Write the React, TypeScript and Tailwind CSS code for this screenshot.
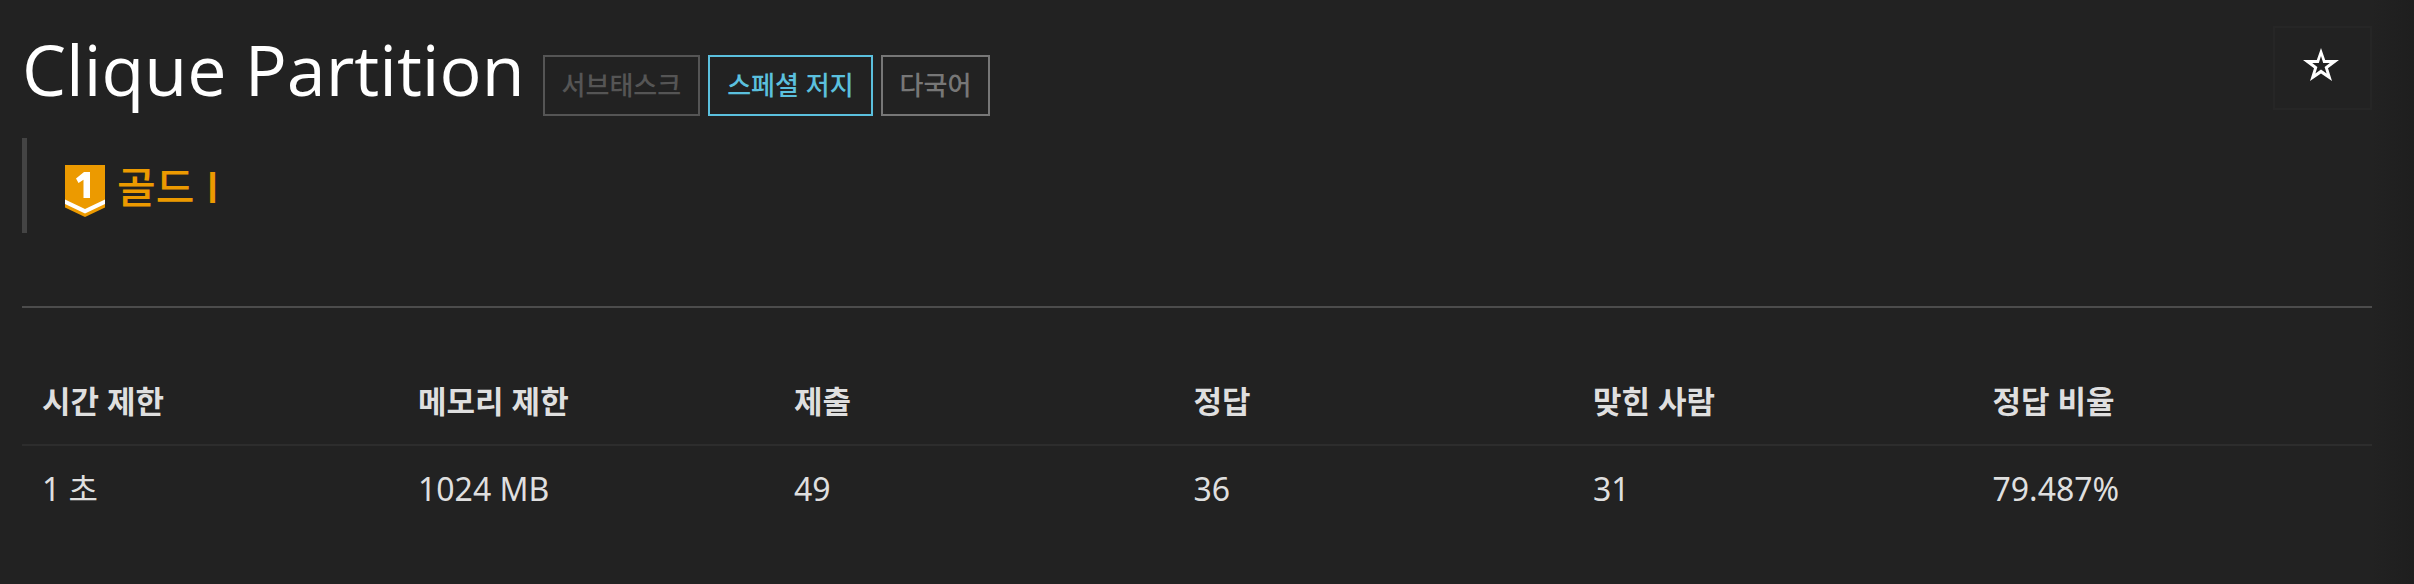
type Tag = { label: string; className: string };

const tags: Tag[] = [
  { label: "서브태스크", className: "border-[#555555] text-[#555555]" },
  { label: "스페셜 저지", className: "border-[#5bc0de] text-[#5bc0de]" },
  { label: "다국어", className: "border-[#777777] text-[#777777]" },
];

const columns = [
  { header: "시간 제한", value: "1 초", width: "w-[16%]" },
  { header: "메모리 제한", value: "1024 MB", width: "w-[16%]" },
  { header: "제출", value: "49", width: "w-[17%]" },
  { header: "정답", value: "36", width: "w-[17%]" },
  { header: "맞힌 사람", value: "31", width: "w-[17%]" },
  { header: "정답 비율", value: "79.487%", width: "w-[17%]" },
];

function TierBadge() {
  return (
    <svg viewBox="0 0 40 52" className="h-[52px] w-10 shrink-0" aria-hidden="true">
      <path d="M0 0H40V42.500L20 52L0 42.500Z" fill="#ec9a00" />
      <path d="M0 34.500L20 44L40 34.500V39L20 48.500L0 39Z" fill="#fff" />
      <path d="M19 7H25V33H18.500V14.800L13.500 18L11 13.500Z" fill="#fff" />
    </svg>
  );
}

function StarIcon() {
  return (
    <svg viewBox="0 0 36 34" className="h-[34px] w-9" aria-hidden="true">
      <path
        fill="#fff"
        fillRule="evenodd"
        d="M18 0L22.200 12H36L25 20.200L29 33L18 25.600L7 33L11 20.200L0 12H13.800ZM18 8L15.800 15H9.200L14.400 18.900L12.400 25.500L18 21.600L23.600 25.500L21.600 18.900L26.800 15H20.200Z"
      />
    </svg>
  );
}

export default function App() {
  return (
    <main
      lang="ko"
      className="flex min-h-screen bg-[#222222] font-['Noto_Sans','Noto_Sans_CJK_KR',sans-serif] text-[#dfdfdf]"
    >
      <div className="min-w-0 flex-1 pt-[26px] pb-14 pl-[22px]">
        <header className="flex items-start justify-between">
          <div className="flex flex-wrap items-end gap-x-[18px]">
            <h1 className="pb-1 font-['Open_Sans',sans-serif] text-[70px] leading-[86px] text-white">
              Clique Partition
            </h1>
            <ul className="flex gap-2">
              {tags.map((tag) => (
                <li
                  key={tag.label}
                  className={`border-2 px-[17px] text-[26px] leading-[57px] font-medium whitespace-nowrap ${tag.className}`}
                >
                  {tag.label}
                </li>
              ))}
            </ul>
          </div>
          <button
            type="button"
            aria-label="즐겨찾기"
            className="flex h-[84px] w-[99px] shrink-0 items-center justify-center border-2 border-[#262626] pr-[3px] pb-[6px]"
          >
            <StarIcon />
          </button>
        </header>

        <blockquote className="mt-[22px] flex h-[95px] items-center gap-3 border-l-[5px] border-[#444444] pt-[10px] pl-[38px] text-[42px] text-[#ec9a00]">
          <TierBadge />
          <span className="pb-3 font-['Noto_Sans_CJK_KR',sans-serif] leading-[60px] font-medium">골드 I</span>
        </blockquote>

        <hr className="mt-[73px] border-t-2 border-[#4c4c4c]" />

        <table className="mt-[50px] w-full table-fixed text-left leading-[46px]">
          <thead className="text-[31px]">
            <tr className="border-b-2 border-[#2d2d2d]">
              {columns.map((c) => (
                <th key={c.header} className={`px-5 py-5 font-bold ${c.width}`}>
                  {c.header}
                </th>
              ))}
            </tr>
          </thead>
          <tbody className="text-[32px]">
            <tr>
              {columns.map((c) => (
                <td key={c.header} className="px-5 py-5">
                  {c.value}
                </td>
              ))}
            </tr>
          </tbody>
        </table>
      </div>
      <div className="w-[42px] shrink-0 bg-linear-to-r from-[#222222] to-[#1e1e1e]" />
    </main>
  );
}
